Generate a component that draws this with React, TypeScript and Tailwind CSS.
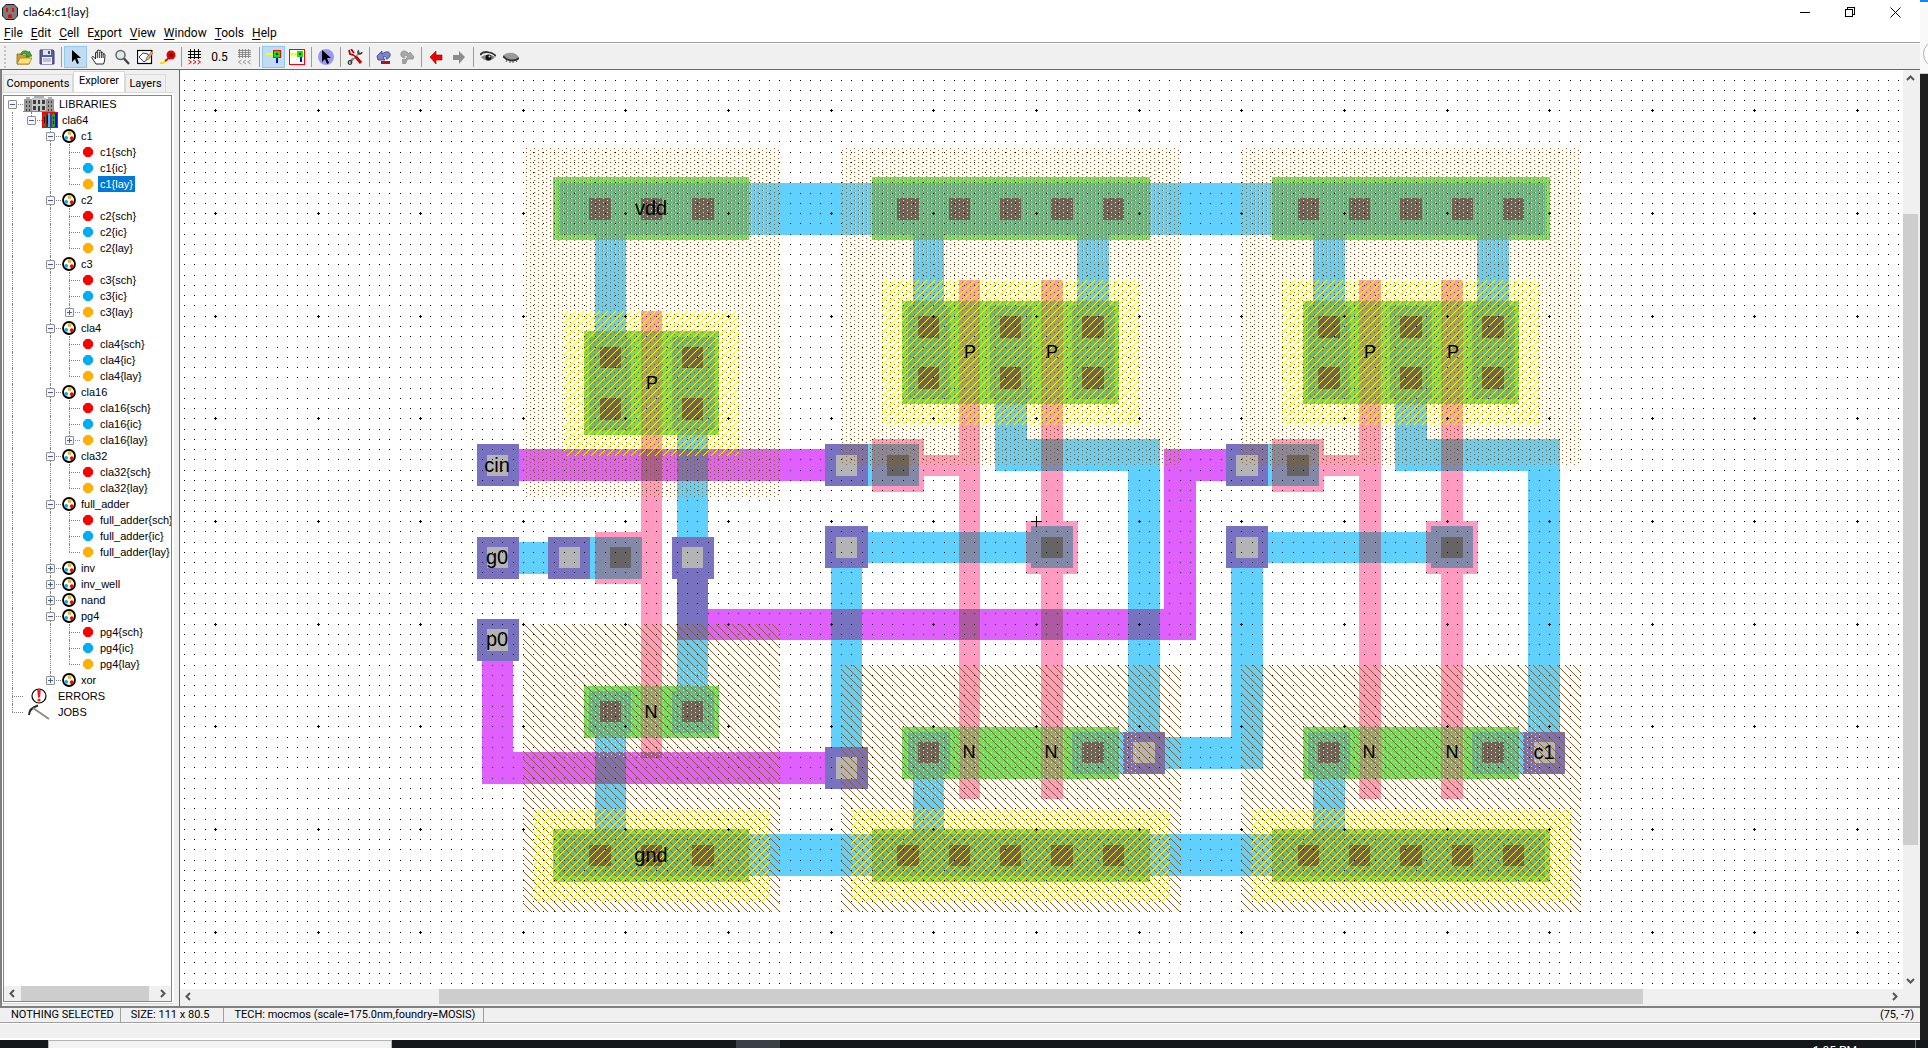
import React from "react";

/* ------------------------------------------------------------------ */
/* Layout drawing                                                      */
/* ------------------------------------------------------------------ */

type Box = [number, number, number, number]; // x1, y1 (low), x2, y2 (high), in lambda
type Px = { x: number; y: number; r: number; b: number };

const SCALE = 10.2632;
const px = (u: number) => Math.round(1035.85 + u * SCALE);
const py = (v: number) => Math.round(521.3 - v * SCALE);
const toPx = ([x1, y1, x2, y2]: Box): Px => ({ x: px(x1), y: py(y2), r: px(x2) + 1, b: py(y1) + 1 });
const shift = (dx: number, boxes: Box[]): Box[] => boxes.map(([a, b, c, d]) => [a + dx, b, c + dx, d]);
const square = (cx: number, cy: number, h: number): Box => [cx - h, cy - h, cx + h, cy + h];

const CELL = 39;
const both = (boxes: Box[]) => [...boxes, ...shift(CELL, boxes)];

const active: Box[] = [
  [-47, 27.5, -28, 33.5],
  [-44, 8.5, -31, 18.5],
  [-44, -21, -31, -16],
  [-47, -35, -28, -30],
  ...both([
    [-16, 27.5, 11, 33.5],
    [-13, 11.5, 8, 21.5],
    [-13, -25, 8, -20],
    [-16, -35, 11, -30],
  ]),
];

const metal1: Box[] = [
  [-46.5, 28, 49.5, 33],
  [-46.5, -34.5, 49.5, -30.5],
  [-43, 10, -40, 30],
  [-43.5, 9, -39.5, 18],
  [-35.5, 9, -31.5, 18],
  [-35, -19, -32, 10],
  [-43.5, -20.5, -39.5, -16.5],
  [-35.5, -20.5, -31.5, -16.5],
  [-43, -32, -40, -18],
  [-52.5, -5, -45.5, -2],
  [-47.5, -5.5, -38.5, -1.5],
  ...both([
    [-12, 13, -9, 30],
    [4, 13, 7, 30],
    [-12.5, 12, -8.5, 21],
    [-4.5, 12, -0.5, 21],
    [3.5, 12, 7.5, 21],
    [-4, 5, -1, 14],
    [-4, 5, 12, 8],
    [9, -22, 12, 8],
    [-20.5, 3.5, -11.5, 7.5],
    [-18.5, -4, 2, -1],
    [-0.5, -4.5, 3.5, -0.5],
    [-12.5, -24.5, -8.5, -20.5],
    [3.5, -24.5, 12.5, -20.5],
    [-12, -32, -9, -22],
  ]),
  [-20, -24, -17, -2.5],
  [19, -24, 22, -2.5],
  [10.5, -24, 22, -21],
];

const metal2: Box[] = [
  [-52.5, 4, -18.5, 7],
  [-54, -25.5, -51, -11.5],
  [-54, -25.5, -18.5, -22.5],
  [-35, -11.5, -32, -3.5],
  [-35, -11.5, 15.5, -8.5],
  [12.5, -11.5, 15.5, 7],
  [12.5, 4, 20.5, 7],
];

const poly: Box[] = [
  [-38.5, -23, -36.5, 20.5],
  [-43, -6, -38, -1],
  ...both([
    [-7.5, -27, -5.5, 23.5],
    [0.5, -27, 2.5, 23.5],
    [-16, 3, -11, 8],
    [-11, 4.5, -7, 6.5],
    [-1, -5, 4, 0],
  ]),
];

const viaCentres: [number, number][] = [
  [-52.5, 5.5],
  [-52.5, -3.5],
  [-52.5, -11.5],
  [-45.5, -3.5],
  [-33.5, -3.5],
  [-18.5, 5.5],
  [-18.5, -2.5],
  [-18.5, -24],
  [10.5, -22.5],
  [20.5, 5.5],
  [20.5, -2.5],
  [49.5, -22.5],
];
const viaPads = viaCentres.map(([x, y]) => square(x, y, 2));
const viaCuts = viaCentres.map(([x, y]) => square(x, y, 1));

const contactCuts: Box[] = [
  ...[-42.5, -37.5, -32.5].flatMap((x) => [square(x, 30.5, 1), square(x, -32.5, 1)]),
  ...[-41.5, -33.5].flatMap((x) => [square(x, 16, 1), square(x, 11, 1), square(x, -18.5, 1)]),
  square(-40.5, -3.5, 1),
  ...both([
    ...[-12.5, -7.5, -2.5, 2.5, 7.5].flatMap((x) => [square(x, 30.5, 1), square(x, -32.5, 1)]),
    ...[-10.5, -2.5, 5.5].flatMap((x) => [square(x, 19, 1), square(x, 14, 1)]),
    square(-10.5, -22.5, 1),
    square(5.5, -22.5, 1),
    square(-13.5, 5.5, 1),
    square(1.5, -2.5, 1),
  ]),
];

const nWell: Box[] = [[-50, 2.5, -25, 36.5], ...both([[-19, 5.5, 14, 36.5]])];
const pWell: Box[] = [[-50, -38, -25, -10], ...both([[-19, -38, 14, -14]])];
const nSelect: Box[] = [
  [-49, 25.5, -26, 35.5],
  [-46, -23, -29, -14],
  ...both([
    [-18, 25.5, 13, 35.5],
    [-15, -27, 10, -18],
  ]),
];
const pSelect: Box[] = [
  [-46, 6.5, -29, 20.5],
  [-49, -37, -26, -28],
  ...both([
    [-15, 9.5, 10, 23.5],
    [-18, -37, 13, -28],
  ]),
];

function rectsPath(rects: Px[]) {
  return rects.map((r) => `M${r.x} ${r.y}H${r.r}V${r.b}H${r.x}Z`).join("");
}
function cross(a: Box[], b: Box[]) {
  const out: Px[] = [];
  for (const p of a.map(toPx))
    for (const q of b.map(toPx)) {
      const r = { x: Math.max(p.x, q.x), y: Math.max(p.y, q.y), r: Math.min(p.r, q.r), b: Math.min(p.b, q.b) };
      if (r.x < r.r && r.y < r.b) out.push(r);
    }
  return rectsPath(out);
}
const solid = (b: Box[]) => rectsPath(b.map(toPx));

function gridPath() {
  let d = "";
  for (let i = -90; i <= 110; i++)
    for (let j = -60; j <= 60; j++) {
      const x = Math.round(1036 + i * SCALE);
      const y = Math.round(521 + j * SCALE);
      d += `M${x} ${y}h1v1h-1z`;
      if (i % 10 === 0 && j % 10 === 0) d += `M${x - 1} ${y}h3v1h-3zM${x} ${y - 1}h1v3h-1z`;
    }
  return d;
}

const layers: [string, string][] = [
  [solid(metal1), "#60d0ff"],
  [solid(metal2), "#e05fff"],
  [solid(poly), "#ff9bc0"],
  [solid(active), "#6be260"],
  [cross(metal1, metal2), "#7872c0"],
  [cross(metal1, poly), "#8289a9"],
  [cross(metal2, poly), "#ad5aa0"],
  [cross(metal1, active), "#5cbd90"],
  [cross(poly, active), "#98a577"],
  [solid(viaPads), "#7872c0"],
  [solid(viaCuts), "#b4b4b4"],
  [solid(contactCuts), "#666464"],
];

const labels: [string, number, number, number][] = [
  ["vdd", 651, 215, 20],
  ["gnd", 651, 862, 20],
  ["cin", 497, 472, 20],
  ["g0", 497, 564, 20],
  ["p0", 497, 646, 20],
  ["c1", 1544, 759, 20],
  ["P", 652, 389, 18],
  ["P", 970, 358, 18],
  ["P", 1052, 358, 18],
  ["P", 1370, 358, 18],
  ["P", 1453, 358, 18],
  ["N", 651, 718, 18],
  ["N", 969, 758, 18],
  ["N", 1051, 758, 18],
  ["N", 1369, 758, 18],
  ["N", 1452, 758, 18],
];

const eight = [0, 1, 2, 3, 4, 5, 6, 7];

function LayoutDrawing() {
  return (
    <svg className="block h-full w-full" role="img" aria-label="c1 layout">
      <defs>
        <pattern id="dotBrown" width="8" height="4" patternUnits="userSpaceOnUse">
          <path d="M6 0h1v1h-1zM2 2h1v1h-1z" fill="#8b5f20" />
        </pattern>
        <pattern id="dotYellow" width="8" height="4" patternUnits="userSpaceOnUse">
          <path d="M7 0h1v1h-1zM3 2h1v1h-1z" fill="#ffff00" />
        </pattern>
        <pattern id="hatchYellow" width="8" height="8" patternUnits="userSpaceOnUse">
          <path d={eight.map((i) => `M${i} ${(14 - i) % 8}h1v1h-1z`).join("")} fill="#ffff00" />
        </pattern>
        <pattern id="hatchBrown" width="8" height="8" patternUnits="userSpaceOnUse">
          <path d={eight.map((i) => `M${(i + 4) % 8} ${i}h1v1h-1z`).join("")} fill="#8b5f20" />
        </pattern>
      </defs>
      <g transform="translate(-180 -70)" shapeRendering="crispEdges">
        {layers.map(([d, fill], i) => (
          <path key={i} d={d} fill={fill} />
        ))}
        <path d={solid(nWell)} fill="url(#dotBrown)" />
        <path d={solid(pWell)} fill="url(#hatchBrown)" />
        <path d={solid(nSelect)} fill="url(#dotYellow)" />
        <path d={solid(pSelect)} fill="url(#hatchYellow)" />
        <path d={gridPath()} fill="#000" />
        <path d="M1031 521h11v1h-11zM1036 516h1v11h-1z" fill="#000" />
      </g>
      <g transform="translate(-180 -70)" fontFamily="'Liberation Sans', Arial, sans-serif" textAnchor="middle">
        {labels.map(([t, x, y, s], i) => (
          <text key={i} x={x} y={y} fontSize={s}>
            {t}
          </text>
        ))}
      </g>
    </svg>
  );
}

/* ------------------------------------------------------------------ */
/* Explorer tree                                                       */
/* ------------------------------------------------------------------ */

type Kind = "libs" | "lib" | "cell" | "sch" | "ic" | "lay" | "errors" | "jobs";
type TreeNode = { name: string; kind: Kind; box?: "-" | "+"; children?: TreeNode[] };

function cell(name: string, views: string): TreeNode {
  return {
    name,
    kind: "cell",
    box: views ? "-" : "+",
    children: views
      ? views.split(" ").map((v) => {
          const kind = v.replace("+", "") as Kind;
          return { name: `${name}{${kind}}`, kind, box: v.endsWith("+") ? "+" : undefined };
        })
      : undefined,
  };
}

const tree: TreeNode[] = [
  {
    name: "LIBRARIES",
    kind: "libs",
    box: "-",
    children: [
      {
        name: "cla64",
        kind: "lib",
        box: "-",
        children: [
          cell("c1", "sch ic lay"),
          cell("c2", "sch ic lay"),
          cell("c3", "sch ic lay+"),
          cell("cla4", "sch ic lay"),
          cell("cla16", "sch ic lay+"),
          cell("cla32", "sch lay"),
          cell("full_adder", "sch ic lay"),
          cell("inv", ""),
          cell("inv_well", ""),
          cell("nand", ""),
          cell("pg4", "sch ic lay"),
          cell("xor", ""),
        ],
      },
    ],
  },
  { name: "ERRORS", kind: "errors" },
  { name: "JOBS", kind: "jobs" },
];

type Row = { node: TreeNode; guides: boolean[]; last: boolean; first: boolean };

function flatten(nodes: TreeNode[], guides: boolean[] = []): Row[] {
  return nodes.flatMap((node, i) => {
    const last = i === nodes.length - 1;
    const row = { node, guides, last, first: guides.length === 0 && i === 0 };
    return [row, ...(node.children ? flatten(node.children, [...guides, !last]) : [])];
  });
}

function TreeIcon({ kind }: { kind: Kind }) {
  if (kind === "sch" || kind === "ic" || kind === "lay") {
    const fill = { sch: "#ff0000", ic: "#00aeef", lay: "#ffb000" }[kind];
    return (
      <svg className="mr-[7px] ml-[3px] shrink-0" width="10" height="10">
        <path d="M3 0h4l3 3v4l-3 3H3L0 7V3z" fill={fill} />
      </svg>
    );
  }
  if (kind === "cell")
    return (
      <svg className="mr-1 shrink-0" width="16" height="16" viewBox="0 0 16 16">
        <circle cx="8" cy="8" r="6" fill="#fff" stroke="#000" strokeWidth="1.8" />
        <circle cx="8.500" cy="5" r="1.900" fill="#ffb000" />
        <circle cx="5.200" cy="9.800" r="1.900" fill="#00aeef" />
        <circle cx="10.800" cy="10.200" r="1.900" fill="#ff0000" />
      </svg>
    );
  if (kind === "lib")
    return (
      <svg className="mr-1 shrink-0" width="16" height="16" shapeRendering="crispEdges">
        <rect width="16" height="16" fill="#f00" />
        <rect x="1" y="2" width="3" height="13" fill="#6b5a1e" />
        <rect x="4" y="2" width="2" height="13" fill="#7a1c1c" />
        <rect x="6" y="1" width="2" height="14" fill="#30c8e8" />
        <rect x="8" y="2" width="2" height="13" fill="#7020a0" />
        <rect x="10" y="2" width="3" height="13" fill="#2c9a30" />
        <rect x="13" y="1" width="2" height="14" fill="#1010d0" />
        <path d="M2 5h1v6h-1zM11 5h1v2h-1zM11 9h1v3h-1zM5 4h1v8h-1z" fill="#111" />
      </svg>
    );
  if (kind === "libs")
    return (
      <svg className="mr-1 shrink-0" width="32" height="16" shapeRendering="crispEdges">
        <path d="M1 3h8v12H1zM23 3h8v12h-8z" fill="#9a9a9a" />
        <path d="M9 2h14v13H9z" fill="#c9c9c9" />
        <path d="M3 1h4v2H3zM25 1h4v2h-4zM11 0h10v2H11z" fill="#b0b0b0" />
        <path
          d="M3 5h1v2H3zM6 5h1v2H6zM3 9h1v2H3zM6 9h1v2H6zM3 13h1v2H3zM6 13h1v2H6zM25 5h1v2h-1zM28 5h1v2h-1zM25 9h1v2h-1zM28 9h1v2h-1zM25 13h1v2h-1zM28 13h1v2h-1zM10 4h3v4h-3zM15 4h2v4h-2zM19 4h3v4h-3zM10 10h3v4h-3zM15 10h2v5h-2zM19 10h3v4h-3z"
          fill="#3c3c3c"
        />
        <path d="M0 15h32v1H0z" fill="#888" />
      </svg>
    );
  if (kind === "errors")
    return (
      <svg className="mr-[11px] ml-2 shrink-0" width="16" height="16">
        <circle cx="8" cy="8" r="7" fill="#fff" stroke="#000" strokeWidth="1.2" />
        <path d="M6.200 2h3.600L9 9.500H7z" fill="#f21c1c" />
        <circle cx="8" cy="12" r="1.600" fill="#f21c1c" />
      </svg>
    );
  return (
    <svg className="mr-2 ml-[5px] shrink-0" width="22" height="16">
      <path d="M1 11C1 6 5 3 10 1.500" fill="none" stroke="#222a30" strokeWidth="2" />
      <path d="M5 4l16 11" stroke="#8d8d80" strokeWidth="2" />
    </svg>
  );
}

function TreeRow({ row }: { row: Row }) {
  const { node, guides, last, first } = row;
  const selected = node.name === "c1{lay}";
  return (
    <li className="flex h-4 items-center whitespace-nowrap">
      {guides.map((on, i) => (
        <span key={i} className="h-4 w-[19px] shrink-0 pl-2">
          {on && <span className="block h-4 border-l border-dotted border-[#808080]" />}
        </span>
      ))}
      <span className="relative h-4 w-[19px] shrink-0 pl-2">
        {!first && (
          <span className={"block border-l border-dotted border-[#808080] " + (last ? "h-2" : "h-4")} />
        )}
        <span className="absolute top-2 left-2 w-[11px] border-t border-dotted border-[#808080]" />
        {node.box && (
          <button
            aria-label={(node.box === "-" ? "Collapse " : "Expand ") + node.name}
            className="absolute top-1 left-1 flex size-[9px] items-center justify-center rounded-[1px] border border-[#8f8f8f] bg-[#f6f6f6]"
          >
            <svg width="5" height="5" shapeRendering="crispEdges">
              <path d={node.box === "-" ? "M0 2h5v1H0z" : "M0 2h5v1H0zM2 0h1v5H2z"} fill="#3c5fa8" />
            </svg>
          </button>
        )}
      </span>
      <TreeIcon kind={node.kind} />
      <span className={selected ? "-ml-0.5 h-4 bg-[#0078d7] px-0.5 text-white" : ""}>{node.name}</span>
    </li>
  );
}

/* ------------------------------------------------------------------ */
/* Toolbar                                                             */
/* ------------------------------------------------------------------ */

function Tool({ label, on, children }: { label: string; on?: boolean; children: React.ReactNode }) {
  return (
    <button
      aria-label={label}
      className={
        "flex h-[22px] w-[23px] shrink-0 items-center justify-center " +
        (on ? "border border-[#90c8f6] bg-[#c0dcf3]" : "")
      }
    >
      <svg width="16" height="16" viewBox="0 0 16 16" className="shrink-0">
        {children}
      </svg>
    </button>
  );
}

function Sep({ tight }: { tight?: boolean }) {
  return (
    <span className={"flex h-5 shrink-0 justify-center " + (tight ? "w-1" : "w-1.5")}>
      <span className="h-5 w-px bg-[#9c9c9c]" />
    </span>
  );
}

const arrowCursor = "M4 1v12l3-3 2 5 2-1-2-5h4z";

function Toolbar() {
  return (
    <div role="toolbar" className="flex h-[26px] shrink-0 items-center border-t border-white bg-[#f0f0f0]">
      <span className="ml-1 h-[22px] w-2 shrink-0">
        <span className="block h-full border-l-2 border-dotted border-[#c4c4c4]" />
      </span>
      <Tool label="Open library">
        <path d="M1 5h5l1 1h6v9H1z" fill="#c8a03c" stroke="#8f6a10" strokeWidth=".8" />
        <path d="M1 15l3-6h12l-3 6z" fill="#ffe27a" stroke="#a87c14" strokeWidth=".8" />
        <path d="M5 4c2-3 6-3 8 0V2l3 5-6 1 1-2C9 4 7 4 5 6z" fill="#44a832" stroke="#256b1c" strokeWidth=".6" />
      </Tool>
      <Tool label="Save library">
        <path d="M1 1h13l1 1v13H1z" fill="#5a5f9c" stroke="#3c4074" />
        <path d="M4 1h8v5H4z" fill="#dfe3f2" />
        <path d="M9 2h2v3H9z" fill="#4a4f88" />
        <path d="M3 8h10v7H3z" fill="#eef0f8" />
        <path d="M4 10h8M4 12h8" stroke="#8d92bd" />
      </Tool>
      <Sep />
      <Tool label="Click, zoom and wire" on>
        <path d={arrowCursor} />
      </Tool>
      <Tool label="Pan">
        <path
          d="M5 15l-4-6c-.6-1.4 1-2 2-.8L4.500 10V4c0-1.300 1.500-1.300 1.700 0V2c.1-1.300 1.800-1.300 2 0v0c.2-1 1.800-1 1.900.4V4c.4-1.200 1.900-1 2 .3v1c.5-.9 1.900-.6 1.900.7l-.5 6-1 3z"
          fill="#fff"
          stroke="#111"
          strokeWidth=".9"
        />
        <path d="M6.300 4v5M8.300 2.500V9M10.300 3.500V9M12.100 5v4" stroke="#111" strokeWidth=".9" />
      </Tool>
      <Tool label="Zoom">
        <circle cx="6.500" cy="6" r="4.500" fill="#e2e8ee" stroke="#666" strokeWidth="1.500" />
        <path d="M10 9.500L15 15" stroke="#444" strokeWidth="2.400" />
      </Tool>
      <Tool label="Outline edit">
        <rect x=".5" y="1.500" width="14" height="13" fill="#fff" stroke="#000" strokeWidth="1.200" />
        <path d="M2 8l4-4 5 1 1 4-5 4z" fill="none" stroke="#2a3c90" />
        <path d="M16 1l-6 7-1 3 3-1 4-6z" fill="#d8b070" stroke="#7a5020" strokeWidth=".6" />
      </Tool>
      <Tool label="Measure">
        <path d="M0 14h3l4-3" fill="none" stroke="#f5e000" strokeWidth="2" />
        <path d="M5 12l4-3" stroke="#d00" strokeWidth="1.600" />
        <circle cx="11" cy="6" r="4.500" fill="#e00000" />
        <circle cx="11" cy="6" r="1.600" fill="#300" />
      </Tool>
      <Sep tight />
      <Tool label="Double grid">
        <g shapeRendering="crispEdges">
          <path d="M1 2h13v1H1zM1 5h13v1H1zM1 8h13v1H1zM3 0h1v10H3zM7 0h1v10H7zM11 0h1v10h-1z" />
        </g>
        <path d="M1.500 11l3 2-3 2M6 11l3 2-3 2M10.500 11l3 2-3 2" fill="none" stroke="#f00" />
      </Tool>
      <button className="h-[22px] w-[27px] shrink-0 text-center text-xs">0.5</button>
      <Tool label="Half grid">
        <g shapeRendering="crispEdges" fill="#8c8c8c">
          <path d="M1 1h13v1H1zM1 3h13v1H1zM1 5h13v1H1zM1 7h13v1H1zM2 0h1v9H2zM5 0h1v9H5zM8 0h1v9H8zM11 0h1v9h-1z" />
        </g>
        <path d="M4.500 11l-3 2 3 2M9 11l-3 2 3 2M13.500 11l-3 2 3 2" fill="none" stroke="#999" />
      </Tool>
      <Sep />
      <Tool label="Select objects" on>
        <g shapeRendering="crispEdges">
          <path d="M0 4h7v2H0z" fill="#ff0" />
          <rect x="7" y="1" width="8" height="8" fill="#f00" />
          <rect x="8" y="2" width="6" height="6" fill="#0e0" />
          <path d="M10 4h2v2h-2z" />
          <path d="M10 9h2v5h-2z" fill="#00f" />
        </g>
      </Tool>
      <Tool label="Select area">
        <g shapeRendering="crispEdges">
          <rect x="0" y="0" width="16" height="16" fill="#f00" />
          <rect x="1" y="1" width="14" height="14" fill="#fff" />
          <path d="M1 4h8v2H1z" fill="#ff0" />
          <rect x="8" y="2" width="6" height="6" fill="#0e0" />
          <path d="M10 4h2v2h-2z" />
          <path d="M11 8h2v5h-2z" fill="#00f" />
        </g>
      </Tool>
      <Sep />
      <Tool label="Toggle special select">
        <ellipse cx="8" cy="8" rx="8" ry="8" fill="#9a9af4" />
        <path d={arrowCursor} />
      </Tool>
      <Sep />
      <Tool label="Preferences">
        <path d="M13 3L3 14M3 12l3-3" stroke="#8c8c8c" strokeWidth="1.500" />
        <path d="M5 5l5 4" stroke="#b00000" strokeWidth="1.600" />
        <path d="M2 1l1 4 3 1M4 0l3 4" fill="none" stroke="#b00000" strokeWidth="1.800" />
        <path d="M9 8l5 6" stroke="#c80000" strokeWidth="3" />
        <path d="M12 1.500c-2 1-1 4 1 3.500s2-1 2-2" fill="none" stroke="#333" strokeWidth="1.400" />
        <circle cx="3" cy="13.500" r="1.800" fill="none" stroke="#333" strokeWidth="1.200" />
      </Tool>
      <Sep />
      <Tool label="Undo">
        <path d="M1 7l5-5v3c5-4 9-2 8 2-1 2-2 3-4 3 1-2 0-3-3-2l2 3H2z" fill="#7a86cc" stroke="#2e3a80" strokeWidth=".8" />
        <path d="M5 12h9v3H5z" fill="#b01020" />
      </Tool>
      <Tool label="Redo">
        <path d="M15 8l-4-5-1 2C6 0 1 2 2 6c0 2 2 3 4 3-1-2 0-3 3-2l-2 3h7z" fill="#a8a8a8" stroke="#8c8c8c" strokeWidth=".8" />
        <path d="M3 10h6l-2 5H3z" fill="#a0a0a0" />
      </Tool>
      <Sep />
      <Tool label="Go back">
        <path d="M2 8l6-6v4h6v5H8v4z" fill="#f00000" stroke="#900" strokeWidth=".6" />
      </Tool>
      <Tool label="Go forward">
        <path d="M14 8L8 2v4H2v5h6v4z" fill="#8c8c8c" />
      </Tool>
      <Sep />
      <Tool label="Expand">
        <path d="M0 6c3-4 11-4 16 1" fill="none" stroke="#333" strokeWidth="2" />
        <path d="M1 8c4-3 10-3 14 0-4 5-10 5-14 0z" fill="#8a8a8a" />
        <circle cx="8.500" cy="8.500" r="3" fill="#111" />
        <circle cx="9.500" cy="7.500" r="1" fill="#ddd" />
      </Tool>
      <Tool label="Unexpand">
        <path d="M0 7c4-5 14-4 16 2-5 4-13 3-16-2z" fill="#9a9a9a" />
        <path d="M0 7c3 5 12 6 16 2" fill="none" stroke="#333" strokeWidth="1.800" />
        <path d="M4 11l-1 2M7 12v2M10 12v2M13 11l1 2" stroke="#555" />
      </Tool>
    </div>
  );
}

/* ------------------------------------------------------------------ */
/* Window parts                                                        */
/* ------------------------------------------------------------------ */

function Chevron({ d, label, vertical }: { d: string; label: string; vertical?: boolean }) {
  return (
    <button
      aria-label={label}
      className={"flex shrink-0 items-center justify-center " + (vertical ? "h-[17px] w-[15px]" : "h-[15px] w-[17px]")}
    >
      <svg width="9" height="9" viewBox="0 0 9 9">
        <path d={d} fill="none" stroke="#555" strokeWidth="2" />
      </svg>
    </button>
  );
}
const LEFT = "M6 1L2.500 4.500 6 8";
const RIGHT = "M3 1l3.500 3.500L3 8";
const UP = "M1 6l3.500-3.500L8 6";
const DOWN = "M1 3l3.500 3.500L8 3";

const menus: [string, string, string][] = [
  ["", "F", "ile"],
  ["", "E", "dit"],
  ["", "C", "ell"],
  ["E", "x", "port"],
  ["", "V", "iew"],
  ["", "W", "indow"],
  ["", "T", "ools"],
  ["", "H", "elp"],
];

function TitleBar() {
  return (
    <header className="flex h-6 shrink-0 items-center bg-white">
      <svg className="ml-0.5 shrink-0" width="16" height="16">
        <path d="M4 0h8l4 4v8l-4 4H4l-4-4V4z" fill="#1c1c1c" />
        <path d="M4 1h8l3 3v8l-3 3H4l-3-3V4z" fill="#7c7c7c" />
        <path d="M4 4h2v4H4zM10 4h2v4h-2zM6 11l2-1 2 1v3H6z" fill="#f00" />
      </svg>
      <h1 className="ml-[5px] flex-1 font-['Lato',sans-serif] text-xs">cla64:c1{"{lay}"}</h1>
      <button aria-label="Minimize" className="flex h-5 w-[45px] items-center justify-center">
        <svg width="10" height="10" shapeRendering="crispEdges">
          <path d="M0 5h10v1H0z" />
        </svg>
      </button>
      <button aria-label="Restore" className="flex h-5 w-[45px] items-center justify-center">
        <svg width="10" height="10" shapeRendering="crispEdges">
          <path d="M0 2h8v1H0zM0 9h8v1H0zM0 2h1v8H0zM7 2h1v8H7zM2 0h8v1H2zM9 0h1v8H9zM2 0h1v2H2zM8 7h2v1H8z" />
        </svg>
      </button>
      <button aria-label="Close" className="mr-0.5 flex h-5 w-[46px] items-center justify-center">
        <svg width="11" height="11">
          <path d="M.5.5l10 10M10.500.5l-10 10" stroke="#000" />
        </svg>
      </button>
    </header>
  );
}

function Sidebar() {
  return (
    <aside className="flex w-[178px] shrink-0 flex-col border-l-2 border-[#808080] bg-[#f0f0f0] pr-1 pb-0.5">
      <div role="tablist" className="ml-px flex h-[22px] shrink-0 items-end text-[11px] leading-4">
        <button role="tab" aria-selected="false" className="h-[18px] w-[70px] border border-b-0 border-[#d9d9d9]">
          Components
        </button>
        <button
          role="tab"
          aria-selected="true"
          className="h-[21px] w-[52px] border border-b-0 border-[#d9d9d9] bg-white pb-0.5"
        >
          Explorer
        </button>
        <button role="tab" aria-selected="false" className="h-[18px] w-[41px] border border-b-0 border-[#d9d9d9]">
          Layers
        </button>
      </div>
      <div className="flex min-h-0 flex-1 flex-col border-y border-[#d9d9d9] bg-white pt-0.5 pr-0.5 pb-px pl-px">
        <div className="flex min-h-0 flex-1 flex-col border border-[#828790]">
          <ul className="min-h-0 flex-1 overflow-hidden font-['Liberation_Sans',Arial,sans-serif] text-[11px] leading-4">
            {flatten(tree).map((row, i) => (
              <TreeRow key={i} row={row} />
            ))}
          </ul>
          <div className="flex h-[15px] shrink-0 bg-[#f0f0f0]">
            <Chevron d={LEFT} label="Scroll tree left" />
            <div className="flex-1">
              <div className="h-full w-[96%] bg-[#cdcdcd]" />
            </div>
            <Chevron d={RIGHT} label="Scroll tree right" />
          </div>
        </div>
      </div>
    </aside>
  );
}

function Canvas() {
  return (
    <main className="ml-px flex min-w-0 flex-1 flex-col border-l border-[#696969] bg-[#f0f0f0] pr-0.5 pb-0.5">
      <div className="flex min-h-0 flex-1">
        <div className="min-w-0 flex-1 overflow-hidden bg-white">
          <LayoutDrawing />
        </div>
        <div className="flex w-[15px] shrink-0 flex-col bg-[#f0f0f0]">
          <Chevron d={UP} label="Scroll up" vertical />
          <div className="flex min-h-0 flex-1 flex-col">
            <div className="h-[14.3%]" />
            <div className="h-[71.3%] bg-[#cdcdcd]" />
          </div>
          <Chevron d={DOWN} label="Scroll down" vertical />
        </div>
      </div>
      <div className="flex h-[15px] shrink-0 pr-[15px]">
        <Chevron d={LEFT} label="Scroll left" />
        <div className="flex-1">
          <div className="ml-[14.3%] h-full w-[71.3%] bg-[#cdcdcd]" />
        </div>
        <Chevron d={RIGHT} label="Scroll right" />
      </div>
    </main>
  );
}

function StatusBar() {
  return (
    <footer className="flex h-[34px] shrink-0 flex-col border-t-2 border-b-2 border-t-[#808080] border-b-white bg-[#f0f0f0]">
      <div className="flex h-[15px] items-center border-b border-[#a0a0a0] pr-1.5 text-[11px] leading-[14px]">
        <span className="border-r border-[#a0a0a0] pr-1.5 pl-[11px]">NOTHING SELECTED</span>
        <span className="border-r border-[#a0a0a0] pr-3.5 pl-2.5">SIZE: 111 x 80.5</span>
        <span className="border-r border-[#a0a0a0] pr-2 pl-2.5">TECH: mocmos (scale=175.0nm,foundry=MOSIS)</span>
        <span className="ml-auto">(75, -7)</span>
      </div>
      <div className="h-px bg-white" />
    </footer>
  );
}

export default function App() {
  return (
    <div className="flex h-screen flex-col overflow-hidden bg-[#15181b] font-['Roboto','Open_Sans',sans-serif] text-black">
      <div className="flex min-h-0 flex-1">
        <div className="flex min-w-0 flex-1 flex-col bg-[#f0f0f0]">
          <TitleBar />
          <nav className="flex h-[19px] shrink-0 items-center gap-2 border-b border-[#a0a0a0] bg-white pl-1 text-xs leading-4">
            {menus.map(([a, b, c]) => (
              <button key={a + b + c}>
                {a}
                <u className="underline-offset-2">{b}</u>
                {c}
              </button>
            ))}
          </nav>
          <Toolbar />
          <div className="flex min-h-0 flex-1 border-t border-t-[#696969]">
            <Sidebar />
            <Canvas />
          </div>
          <StatusBar />
        </div>
        <div className="w-2 shrink-0 bg-[#1f1f1f]">
          <div className="h-[74px] overflow-hidden border-t-2 border-b border-t-[#0a84ff] border-b-[#cccccc] bg-[#f9f9f9] pt-[38px] pl-[3px]">
            <div className="size-7 rounded-full border border-[#b0b0b0] bg-white" />
          </div>
        </div>
      </div>
      <div className="flex h-2 shrink-0 overflow-hidden">
        <div className="ml-12 h-2 w-[344px] border border-b-0 border-[#b4b4b4] bg-[#f2f2f2]" />
        <div className="ml-[344px] h-2 w-[44px] bg-[#3b4046]" />
        <time className="mr-[58px] ml-auto pt-[3px] text-xs leading-4 text-white">1:05 PM</time>
        <div className="mr-3 h-2 w-px bg-[#6b6b6b]" />
      </div>
    </div>
  );
}
